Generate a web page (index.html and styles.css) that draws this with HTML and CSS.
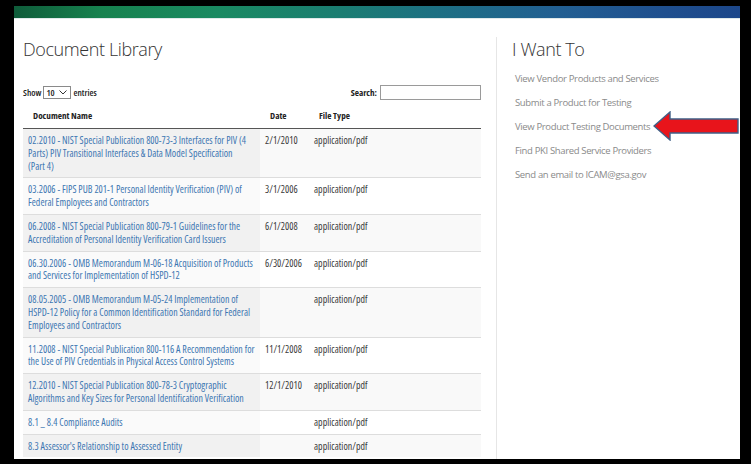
FILE: index.html
```html
<!DOCTYPE html>
<html lang="en">
<head>
<meta charset="utf-8">
<title>Document Library</title>
<link rel="stylesheet" href="styles.css">
</head>
<body>
<div class="frame">
  <div class="banner"></div>
  <div class="content">
    <main class="library">
      <h1 class="title">Document Library</h1>
      <div class="controls">
        <div class="length">Show <span class="select"><span>10</span><svg width="8" height="5" viewBox="0 0 8 5"><path d="M0.5 0.5 L4 4 L7.5 0.5" fill="none" stroke="#333" stroke-width="1"/></svg></span> entries</div>
        <div class="search">Search: <span class="input"></span></div>
      </div>
      <table class="docs">
        <thead>
          <tr><th class="c-name">Document Name</th><th class="c-date">Date</th><th class="c-type">File Type</th></tr>
        </thead>
        <tbody>
          <tr class="odd"><td class="c-name"><a href="#">02.2010 - NIST Special Publication 800-73-3 Interfaces for PIV (4 Parts) PIV Transitional Interfaces &amp; Data Model Specification (Part&nbsp;4)</a></td><td>2/1/2010</td><td>application/pdf</td></tr>
          <tr class="even"><td class="c-name"><a href="#">03.2006 - FIPS PUB 201-1 Personal Identity Verification (PIV) of Federal Employees and Contractors</a></td><td>3/1/2006</td><td>application/pdf</td></tr>
          <tr class="odd"><td class="c-name"><a href="#">06.2008 - NIST Special Publication 800-79-1 Guidelines for the Accreditation of Personal Identity Verification Card Issuers</a></td><td>6/1/2008</td><td>application/pdf</td></tr>
          <tr class="even"><td class="c-name"><a href="#">06.30.2006 - OMB Memorandum M-06-18 Acquisition of Products and Services for Implementation of HSPD-12</a></td><td>6/30/2006</td><td>application/pdf</td></tr>
          <tr class="odd"><td class="c-name"><a href="#">08.05.2005 - OMB Memorandum M-05-24 Implementation of HSPD-12 Policy for a Common Identification Standard for Federal Employees and Contractors</a></td><td></td><td>application/pdf</td></tr>
          <tr class="even"><td class="c-name"><a href="#">11.2008 - NIST Special Publication 800-116 A Recommendation for the Use of PIV Credentials in Physical Access Control Systems</a></td><td>11/1/2008</td><td>application/pdf</td></tr>
          <tr class="odd"><td class="c-name"><a href="#">12.2010 - NIST Special Publication 800-78-3 Cryptographic Algorithms and Key Sizes for Personal Identification Verification</a></td><td>12/1/2010</td><td>application/pdf</td></tr>
          <tr class="even"><td class="c-name"><a href="#">8.1 _ 8.4 Compliance Audits</a></td><td></td><td>application/pdf</td></tr>
          <tr class="odd"><td class="c-name"><a href="#">8.3 Assessor's Relationship to Assessed Entity</a></td><td></td><td>application/pdf</td></tr>
        </tbody>
      </table>
    </main>
    <aside class="sidebar">
      <h2 class="title">I Want To</h2>
      <ul class="links">
        <li><a href="#">View Vendor Products and Services</a></li>
        <li><a href="#">Submit a Product for Testing</a></li>
        <li><a href="#">View Product Testing Documents</a></li>
        <li><a href="#">Find PKI Shared Service Providers</a></li>
        <li><a href="#">Send an email to ICAM@gsa.gov</a></li>
      </ul>
    </aside>
  </div>
  <svg class="arrow" width="86" height="30" viewBox="0 0 86 30">
    <polygon points="1,15 17,1 17,8 85,8 85,22 17,22 17,29" fill="#e8141b" stroke="#3f5f86" stroke-width="1.4" stroke-linejoin="miter"/>
  </svg>
</div>
</body>
</html>
```

FILE: styles.css
```css
html, body {
  margin: 0;
  padding: 0;
  background: #000;
}
body {
  width: 751px;
  height: 464px;
  overflow: hidden;
  font-family: "Open Sans", "Noto Sans", Roboto, sans-serif;
}
.frame {
  position: relative;
  margin: 6px 11px 0 14px;
  height: 453px;
  background: #fff;
  overflow: hidden;
}
.banner {
  height: 12px;
  background: linear-gradient(90deg, #0f5c3a 0%, #17824f 12%, #1a8a62 28%, #1b7d72 45%, #1d7083 58%, #225f92 75%, #1f4f8e 90%, #1c478a 100%);
  border-bottom: 1px solid #dfe9ea;
}
.content {
  display: flex;
  padding: 18px 0 0 9px;
}
.library {
  width: 458px;
  flex: none;
}
.title {
  margin: 0;
  font-weight: 300;
  font-size: 18px;
  line-height: 24px;
  letter-spacing: -0.4px;
  color: #333;
}
.controls {
  display: flex;
  justify-content: space-between;
  align-items: center;
  margin-top: 23px;
  height: 17px;
  font-size: 9.2px;
  font-weight: 600;
  font-stretch: 80%;
  color: #222;
}
.length {
  display: flex;
  align-items: center;
  gap: 2px;
}
.select {
  display: inline-flex;
  align-items: center;
  justify-content: space-between;
  box-sizing: border-box;
  width: 28px;
  height: 13px;
  padding: 0 3px 0 2px;
  border: 1px solid #8a8a8a;
  font-weight: 600;
}
.search {
  display: flex;
  align-items: center;
  gap: 3px;
  font-weight: 700;
}
.input {
  display: block;
  box-sizing: border-box;
  width: 101px;
  height: 15px;
  border: 1px solid #9a9a9a;
  background: #fff;
}
.docs {
  width: 458px;
  margin-top: 3px;
  border-collapse: collapse;
  table-layout: fixed;
  font-size: 9.9px;
  font-stretch: 85%;
  letter-spacing: 0.03px;
  line-height: 12.8px;
}
.docs th {
  height: 24px;
  padding: 0 5px 0 10px;
  text-align: left;
  font-weight: 700;
  color: #222;
  border-bottom: 1px solid #555;
  vertical-align: middle;
  font-size: 9.2px;
  font-stretch: 80%;
  letter-spacing: 0;
}
.docs th.c-name { width: 222px; }
.docs th.c-date { width: 34px; }
.docs td {
  padding: 5px 5px;
  border-top: 1px solid #dddddd;
  vertical-align: top;
  color: #3a3a3a;
}
.docs tbody tr:first-child td { border-top: none; }
.docs td a {
  color: #3c76b1;
  text-decoration: none;
}
.odd td { background: #f9f9f9; }
.odd td.c-name { background: #f1f1f1; }
.even td { background: #fff; }
.even td.c-name { background: #fafafa; }
.sidebar {
  margin-left: 15px;
  padding-left: 15px;
  border-left: 1px solid #e6e6e6;
  flex: 1;
  height: 440px;
}
.links {
  list-style: none;
  margin: 6px 0 0 0;
  padding: 0 0 0 3px;
  font-size: 9.5px;
  letter-spacing: -0.35px;
  line-height: 24px;
}
.links a {
  color: #8a8a8a;
  text-decoration: none;
}
.arrow {
  position: absolute;
  left: 639px;
  top: 105px;
}
```
